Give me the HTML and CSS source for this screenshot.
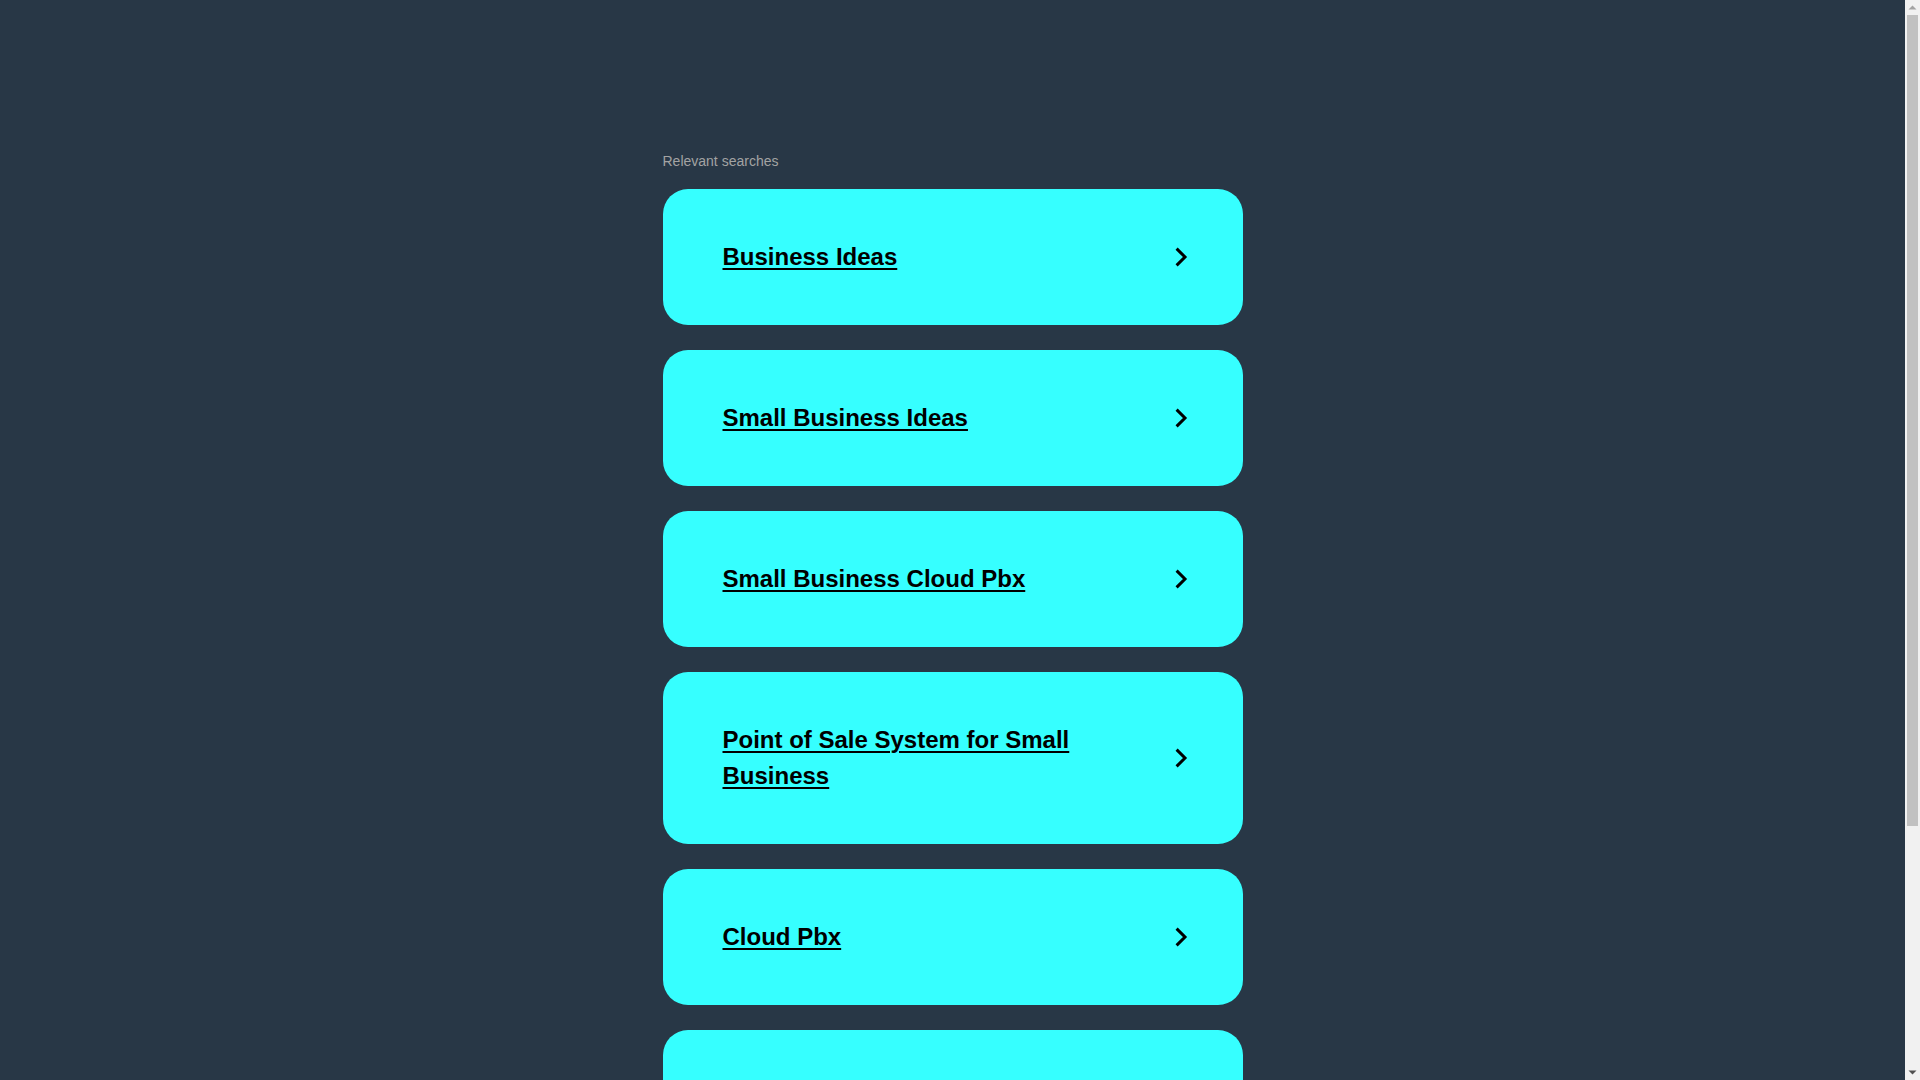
FILE: index.html
```html
<!DOCTYPE html>
<html lang="en">
<head>
<meta charset="utf-8">
<title>Relevant searches</title>
<link rel="stylesheet" href="styles.css">
</head>
<body>
<main class="page">
  <section class="searches">
    <p class="label">Relevant searches</p>
    <ul class="list">
      <li><a class="card" href="#"><span class="card-text">Business Ideas</span><svg class="chev" viewBox="0 0 12 20" width="12" height="20"><polyline points="1.6,1.6 10,10 1.6,18.4"/></svg></a></li>
      <li><a class="card" href="#"><span class="card-text">Small Business Ideas</span><svg class="chev" viewBox="0 0 12 20" width="12" height="20"><polyline points="1.6,1.6 10,10 1.6,18.4"/></svg></a></li>
      <li><a class="card" href="#"><span class="card-text">Small Business Cloud Pbx</span><svg class="chev" viewBox="0 0 12 20" width="12" height="20"><polyline points="1.6,1.6 10,10 1.6,18.4"/></svg></a></li>
      <li><a class="card" href="#"><span class="card-text">Point of Sale System for Small Business</span><svg class="chev" viewBox="0 0 12 20" width="12" height="20"><polyline points="1.6,1.6 10,10 1.6,18.4"/></svg></a></li>
      <li><a class="card" href="#"><span class="card-text">Cloud Pbx</span><svg class="chev" viewBox="0 0 12 20" width="12" height="20"><polyline points="1.6,1.6 10,10 1.6,18.4"/></svg></a></li>
      <li><a class="card" href="#"><span class="card-text">Business Phone Systems</span><svg class="chev" viewBox="0 0 12 20" width="12" height="20"><polyline points="1.6,1.6 10,10 1.6,18.4"/></svg></a></li>
    </ul>
  </section>
</main>
<aside class="scrollbar" aria-hidden="true">
  <svg class="sb-arrow" viewBox="0 0 15 15" width="15" height="15"><polygon points="3.5,9.5 11.5,9.5 7.5,5.5"/></svg>
  <div class="sb-track"><div class="sb-thumb"></div></div>
  <svg class="sb-arrow" viewBox="0 0 15 15" width="15" height="15"><polygon points="3.5,5.5 11.5,5.5 7.5,9.5"/></svg>
</aside>
</body>
</html>
```

FILE: styles.css
```css
html, body {
  margin: 0;
  padding: 0;
}

body {
  display: flex;
  align-items: flex-start;
  background: #283746;
  font-family: "Liberation Sans", Arial, sans-serif;
}

.page {
  flex: 1;
  padding: 151px 0 232px;
}

.searches {
  width: 580px;
  margin: 0 auto;
}

.label {
  margin: 0 0 18px;
  font-size: 14px;
  line-height: 20px;
  color: #a3a3a3;
}

.list {
  list-style: none;
  margin: 0;
  padding: 0;
  display: flex;
  flex-direction: column;
  gap: 25px;
}

.card {
  display: flex;
  align-items: center;
  gap: 20px;
  padding: 50px 56px 50px 60px;
  background: #36ffff;
  border-radius: 25px;
  color: #000;
  text-decoration: none;
}

.card-text {
  flex: 1;
  font-size: 24px;
  line-height: 36px;
  font-weight: bold;
  text-decoration: underline;
  text-decoration-thickness: 2px;
  text-underline-offset: 3px;
}

.chev {
  flex: none;
  overflow: visible;
}

.chev polyline {
  fill: none;
  stroke: #000;
  stroke-width: 3;
  stroke-linecap: butt;
  stroke-linejoin: miter;
}

/* window scrollbar column */
.scrollbar {
  flex: none;
  width: 15px;
  height: 100vh;
  position: sticky;
  top: 0;
  display: flex;
  flex-direction: column;
  background: #f1f1f1;
}

.sb-arrow {
  display: block;
  flex: none;
}

.sb-arrow polygon {
  fill: #a3a3a3;
}

.sb-arrow:last-child polygon {
  fill: #505050;
}

.sb-track {
  flex: 1;
  padding: 0 2px;
}

.sb-thumb {
  height: 811px;
  background: #c1c1c1;
}
```
